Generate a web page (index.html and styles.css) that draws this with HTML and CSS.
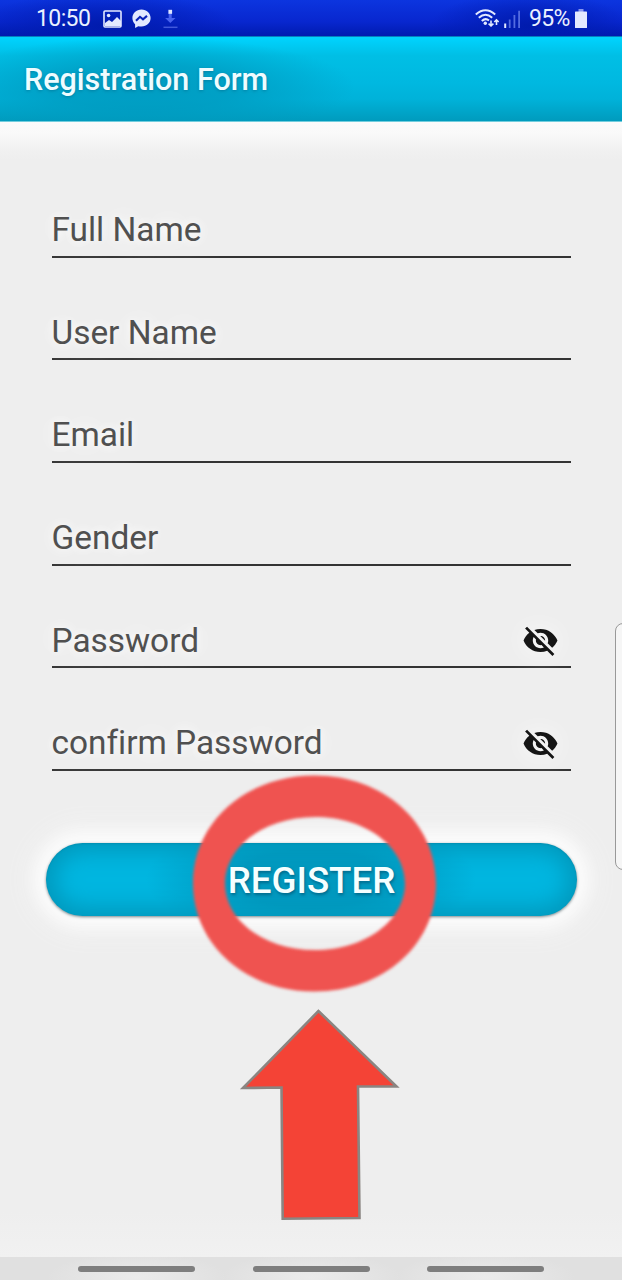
FILE: index.html
```html
<!DOCTYPE html>
<html lang="en">
<head>
<meta charset="utf-8">
<title>Registration Form</title>
<link rel="stylesheet" href="styles.css">
</head>
<body>
<div class="screen">
  <header class="status">
    <div class="status-left">
      <span class="clock">10:50</span>
      <svg class="ic-photo" width="19" height="18" viewBox="0 0 19 18"><rect x="1" y="1" width="17" height="16" rx="1" fill="none" stroke="#e3e9ff" stroke-width="1.6"/><circle cx="5.6" cy="5.5" r="1.8" fill="#e3e9ff"/><path d="M2 16v-3l4-3 3 2 5-5 4 4v5z" fill="#e3e9ff"/></svg>
      <svg class="ic-chat" width="19" height="20" viewBox="0 0 19 20"><path d="M9.5.5C4.300.5.4 4.200.4 9c0 2.600 1.100 4.700 2.700 6.200V19l3.200-1.800c1 .3 2.100.4 3.200.4 5.200 0 9.100-3.600 9.100-8.500S14.700.5 9.500.5z" fill="#e3e9ff"/><path d="M4 11.800l4-4 3 2.500 4-3.400" fill="none" stroke="#0a22b8" stroke-width="2.100"/></svg>
      <svg class="ic-down" width="15" height="20" viewBox="0 0 15 20"><path d="M5.700 4h3v5h3.800l-5.200 5-5.200-5h3.600z" fill="#4963ef"/><path d="M5.400.8h3.700v4H5.400z" fill="#dfe6ff"/><path d="M.5 18.300h14" stroke="#4159dc" stroke-width="1.500"/></svg>
    </div>
    <div class="status-right">
      <svg class="ic-wifi" width="24" height="19" viewBox="0 0 24 19"><g fill="none" stroke="#e3e9ff" stroke-width="2"><path d="M.8 5.400Q10.500-3 20.200 5.400M3.800 8.800Q10.500 2.800 17.200 8.800M6.800 12Q10.500 8.500 14 11.500"/><path d="M16 11.500v5.500M13.600 14.700L16 17l2.400-2.300M21.500 16v-5M19.300 13l2.200-2.200L23.700 13" stroke-width="1.600"/></g><circle cx="10.300" cy="14.200" r="1.700" fill="#e3e9ff"/></svg>
      <svg class="ic-signal" width="17" height="18" viewBox="0 0 17 18"><path d="M.2 13.500h2V18h-2z" fill="#e3e9ff"/><path d="M4.800 9.500h1.800V18H4.800zM9.500 5h1.800v13H9.500zM14.200.8H16V18h-1.800z" fill="#536be0"/></svg>
      <span class="battery-text">95%</span>
      <svg class="ic-battery" width="12" height="19" viewBox="0 0 12 19"><path d="M3.500 0h5v3h-5z" fill="#8797f0"/><rect y="2.500" width="12" height="16.500" rx=".6" fill="#e3e9ff"/></svg>
    </div>
  </header>
  <div class="appbar"><h1 class="title">Registration Form</h1></div>
  <main class="form">
    <div class="field"><span class="label">Full Name</span></div>
    <div class="field"><span class="label">User Name</span></div>
    <div class="field"><span class="label">Email</span></div>
    <div class="field"><span class="label">Gender</span></div>
    <div class="field"><span class="label">Password</span>
      <svg class="eye" viewBox="0 0 24 24"><path d="M12 7c2.760 0 5 2.240 5 5 0 .650-.130 1.260-.360 1.830l2.920 2.920c1.510-1.260 2.700-2.890 3.430-4.750-1.730-4.390-6-7.500-11-7.500-1.400 0-2.740.250-3.980.700l2.160 2.160C10.740 7.130 11.350 7 12 7zM2 4.270l2.280 2.280.460.460C3.080 8.300 1.780 10.020 1 12c1.730 4.390 6 7.500 11 7.500 1.550 0 3.030-.300 4.380-.840l.420.420L19.730 22 21 20.730 3.270 3 2 4.270zM7.530 9.800l1.550 1.550c-.050.210-.080.430-.080.650 0 1.660 1.340 3 3 3 .220 0 .440-.030.650-.080l1.550 1.550c-.670.330-1.410.530-2.200.530-2.760 0-5-2.240-5-5 0-.790.200-1.530.530-2.200zm4.310-.780l3.150 3.150.020-.160c0-1.660-1.340-3-3-3l-.170.010z"/></svg></div>
    <div class="field"><span class="label">confirm Password</span>
      <svg class="eye" viewBox="0 0 24 24"><path d="M12 7c2.760 0 5 2.240 5 5 0 .650-.130 1.260-.360 1.830l2.920 2.920c1.510-1.260 2.700-2.890 3.430-4.750-1.730-4.390-6-7.500-11-7.500-1.400 0-2.740.250-3.980.700l2.160 2.160C10.740 7.130 11.350 7 12 7zM2 4.270l2.280 2.280.460.460C3.080 8.300 1.780 10.020 1 12c1.730 4.390 6 7.500 11 7.500 1.550 0 3.030-.300 4.380-.840l.420.420L19.730 22 21 20.730 3.270 3 2 4.270zM7.530 9.800l1.550 1.550c-.050.210-.080.430-.080.650 0 1.660 1.340 3 3 3 .220 0 .440-.030.650-.080l1.550 1.550c-.670.330-1.410.530-2.200.530-2.760 0-5-2.240-5-5 0-.790.200-1.530.530-2.200zm4.310-.780l3.150 3.150.020-.160c0-1.660-1.340-3-3-3l-.170.010z"/></svg></div>
    <button class="register" type="button"><span class="register-text">REGISTER</span></button>
  </main>
  <nav class="nav"><span class="pill"></span><span class="pill"></span><span class="pill"></span></nav>
  <div class="edge-panel"></div>
  <svg class="marks" width="622" height="1280" viewBox="0 0 622 1280">
    <path class="ring" fill-rule="evenodd" d="M193 883.500C193 822 246 775.500 314.500 775.500S436 822 436 883.500 383 991.500 314.500 991.500 193 945 193 883.500zM225 883.500C225 920 264 950 315 950S405 920 405 883.500 366 817 315 817 225 847 225 883.500z"/>
    <path class="arrow" d="M318.500 1011L243 1088l38.500-.5 1.200 131.300 76.800-.8-1.500-131.500 38.500 0z"/>
  </svg>
</div>
</body>
</html>
```
FILE: styles.css
```css
* { box-sizing: border-box; }
body { margin: 0; font-family: Roboto, "Liberation Sans", sans-serif; }
.screen {
  position: relative;
  display: flex;
  flex-direction: column;
  width: 622px;
  height: 1280px;
  overflow: hidden;
  background: #eeeeee;
}
.status {
  display: flex;
  justify-content: space-between;
  height: 36px;
  padding: 1px 35px 0 36px;
  background: radial-gradient(ellipse 130px 34px at 105px 26px, #001bad, transparent), radial-gradient(ellipse 100px 34px at 530px 26px, #001bad, transparent), linear-gradient(#0c35df, #0827cf 60%, #001bb0);
  color: #eaf0ff;
  font-size: 23px;
  line-height: 40px;
}
.status-left, .status-right { display: flex; align-items: center; }
.clock { width: 67px; letter-spacing: -0.6px; }
.ic-chat { margin: 1px 0 0 10px; }
.ic-down { margin-left: 12px; }
.ic-wifi { margin-right: 5px; }
.ic-signal { margin-right: 8px; }
.battery-text { width: 46px; letter-spacing: -0.7px; white-space: nowrap; }
.ic-battery { margin-right: 0; }
.appbar {
  display: flex;
  align-items: center;
  height: 86px;
  padding: 0 24px;
  border-top: 1px solid #087fbd;
  border-bottom: 1px solid #72cddd;
  background: radial-gradient(ellipse 210px 50px at 145px 50px, rgba(0,153,190,.85), rgba(0,153,190,.7) 45%, transparent), linear-gradient(#00d4ff 0, #00bfe5 22%, #00b8e0 55%, #00b2d9 74%, #009bbd 100%);
}
.title {
  margin: 1px 0 0;
  color: #effcff;
  font-size: 30.5px;
  font-weight: 500;
  text-shadow: 0 1px 3px rgba(0,80,110,.4);
  white-space: nowrap;
}
.form {
  display: flex;
  flex-direction: column;
  flex: 1;
  padding: 33.2px 45px 0 46px;
  background: linear-gradient(#fbfbfb 0, #f9f9f9 12px, #f0f0f0 30px, #eee 38px, #eee 1090px, #f1f1f1);
}
.field {
  display: flex;
  align-items: flex-end;
  justify-content: space-between;
  height: 102.6px;
  margin: 0 6px 0 5.5px;
  border-bottom: 2px solid #333;
}
.label {
  height: 52px;
  margin-bottom: -0.5px;
  line-height: 52px;
  color: #505050;
  font-size: 33.4px;
  font-variant-ligatures: none;
  white-space: nowrap;
  text-shadow: 0 0 9px #fff, 0 0 30px #fff;
}
.eye {
  width: 37px;
  height: 37px;
  margin: 0 12px 7px 0;
  fill: #151515;
  filter: drop-shadow(0 0 12px #fff);
}
.register {
  height: 73px;
  margin-top: 72.2px;
  padding: 0;
  border: 0;
  border-radius: 36.5px;
  background: radial-gradient(ellipse 165px 65px at 265px 36px, #0099bf 45%, transparent), #00b6e0;
  box-shadow: inset 0 0 22px 9px #0099bd, inset 0 1px 2px #00728f, 0 1px 3px #77858a, 0 0 14px 11px #fbfbfb, 0 0 26px 18px #f3f3f3;
  color: #f5ffff;
  font-family: inherit;
  font-size: 36.7px;
  font-weight: 500;
  text-shadow: 1px 2px 3px rgba(0,70,100,.55);
}
.register-text { display: block; padding-top: 3px; }
.nav {
  display: flex;
  justify-content: center;
  gap: 57.5px;
  height: 23px;
  padding-top: 9px;
  background: radial-gradient(ellipse 90px 24px at 137px 20px, #ebebeb, transparent), radial-gradient(ellipse 90px 24px at 311px 20px, #ebebeb, transparent), radial-gradient(ellipse 90px 24px at 485px 20px, #ebebeb, transparent), #e0e0e0;
}
.pill { width: 117px; height: 5.5px; border-radius: 3px; background: #7e7e7e; }
.edge-panel {
  position: absolute;
  left: 615px;
  top: 623px;
  width: 20px;
  height: 247px;
  border: 1.5px solid #999;
  border-radius: 8px;
  background: #f6f6f6;
}
.marks { position: absolute; left: 0; top: 0; pointer-events: none; }
.ring { fill: #ef5350; filter: blur(1.7px); }
.arrow { fill: #f44336; stroke: #8a8582; stroke-width: 2.6; }
```
